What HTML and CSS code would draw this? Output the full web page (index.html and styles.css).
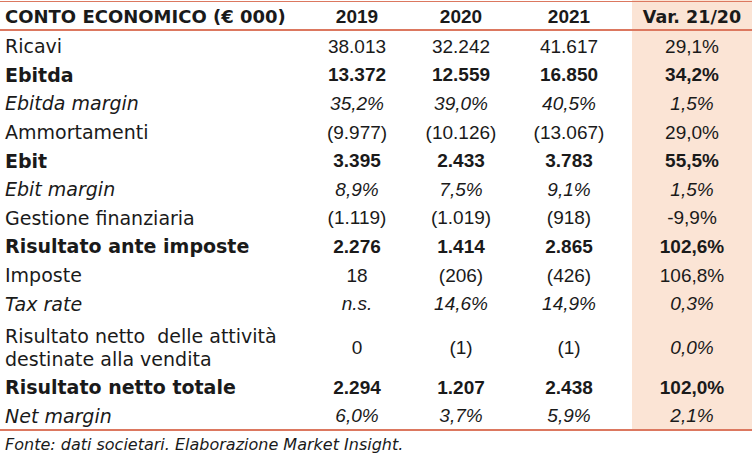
FILE: index.html
```html
<!DOCTYPE html>
<html lang="it">
<head>
<meta charset="utf-8">
<link rel="stylesheet" href="styles.css">
</head>
<body>
<div class="sheet">
  <div class="row head">
    <div class="lbl">CONTO ECONOMICO (€ 000)</div>
    <div class="num">2019</div>
    <div class="num">2020</div>
    <div class="num">2021</div>
    <div class="num var">Var. 21/20</div>
  </div>
  <div class="row">
    <div class="lbl">Ricavi</div><div class="num">38.013</div><div class="num">32.242</div><div class="num">41.617</div><div class="num var">29,1%</div>
  </div>
  <div class="row b">
    <div class="lbl">Ebitda</div><div class="num">13.372</div><div class="num">12.559</div><div class="num">16.850</div><div class="num var">34,2%</div>
  </div>
  <div class="row i">
    <div class="lbl">Ebitda margin</div><div class="num">35,2%</div><div class="num">39,0%</div><div class="num">40,5%</div><div class="num var">1,5%</div>
  </div>
  <div class="row">
    <div class="lbl">Ammortamenti</div><div class="num">(9.977)</div><div class="num">(10.126)</div><div class="num">(13.067)</div><div class="num var">29,0%</div>
  </div>
  <div class="row b">
    <div class="lbl">Ebit</div><div class="num">3.395</div><div class="num">2.433</div><div class="num">3.783</div><div class="num var">55,5%</div>
  </div>
  <div class="row i">
    <div class="lbl">Ebit margin</div><div class="num">8,9%</div><div class="num">7,5%</div><div class="num">9,1%</div><div class="num var">1,5%</div>
  </div>
  <div class="row">
    <div class="lbl">Gestione finanziaria</div><div class="num">(1.119)</div><div class="num">(1.019)</div><div class="num">(918)</div><div class="num var">-9,9%</div>
  </div>
  <div class="row b">
    <div class="lbl">Risultato ante imposte</div><div class="num">2.276</div><div class="num">1.414</div><div class="num">2.865</div><div class="num var">102,6%</div>
  </div>
  <div class="row">
    <div class="lbl">Imposte</div><div class="num">18</div><div class="num">(206)</div><div class="num">(426)</div><div class="num var">106,8%</div>
  </div>
  <div class="row i">
    <div class="lbl">Tax rate</div><div class="num">n.s.</div><div class="num">14,6%</div><div class="num">14,9%</div><div class="num var">0,3%</div>
  </div>
  <div class="row tall">
    <div class="lbl">Risultato netto&nbsp; delle attività<br>destinate alla vendita</div><div class="num">0</div><div class="num">(1)</div><div class="num">(1)</div><div class="num var it">0,0%</div>
  </div>
  <div class="row b">
    <div class="lbl">Risultato netto totale</div><div class="num">2.294</div><div class="num">1.207</div><div class="num">2.438</div><div class="num var">102,0%</div>
  </div>
  <div class="row i last">
    <div class="lbl">Net margin</div><div class="num">6,0%</div><div class="num">3,7%</div><div class="num">5,9%</div><div class="num var">2,1%</div>
  </div>
  <div class="source">Fonte: dati societari. Elaborazione Market Insight.</div>
</div>
</body>
</html>
```

FILE: styles.css
```css
html, body {
  margin: 0;
  padding: 0;
  background: #ffffff;
}

.sheet {
  width: 752px;
  font-family: "DejaVu Sans", "Liberation Sans", sans-serif;
  font-size: 19px;
  color: #1a1a1a;
}

.row {
  display: grid;
  grid-template-columns: 298px 118px 90px 126px 120px;
  height: 28.6px;
  align-items: center;
}

.row > div {
  height: 100%;
  display: flex;
  align-items: center;
  padding-top: 3px;
  box-sizing: border-box;
  white-space: nowrap;
}

.lbl {
  padding-left: 5px;
  line-height: 23px;
}

.num {
  justify-content: center;
  font-family: "Liberation Sans", "DejaVu Sans", sans-serif;
}

.var {
  background: #fbe4d5;
}

.head {
  height: 31px;
  font-size: 18px;
  font-weight: bold;
  border-bottom: 2px solid #dc7860;
  box-sizing: border-box;
  background: linear-gradient(to bottom, transparent 1px, #dc7860 1px, #dc7860 2px, transparent 2px);
}

.head > div {
  padding-top: 4px;
}

.head .num {
  font-size: 19px;
}

.head .var {
  font-family: "DejaVu Sans", sans-serif;
  font-size: 17.5px;
  background: linear-gradient(to bottom, #fbe4d5 1px, #dc7860 1px, #dc7860 2px, #fbe4d5 2px);
}

.b {
  font-weight: bold;
}

.i {
  font-style: italic;
}

.it {
  font-style: italic;
}

.tall {
  height: 55px;
}

.tall > div {
  padding-top: 7px;
}

.last {
  height: 30.2px;
  border-bottom: 2px solid #dc7860;
  box-sizing: border-box;
}

.source {
  font-style: italic;
  font-size: 16px;
  padding: 4px 0 0 5px;
}
```
